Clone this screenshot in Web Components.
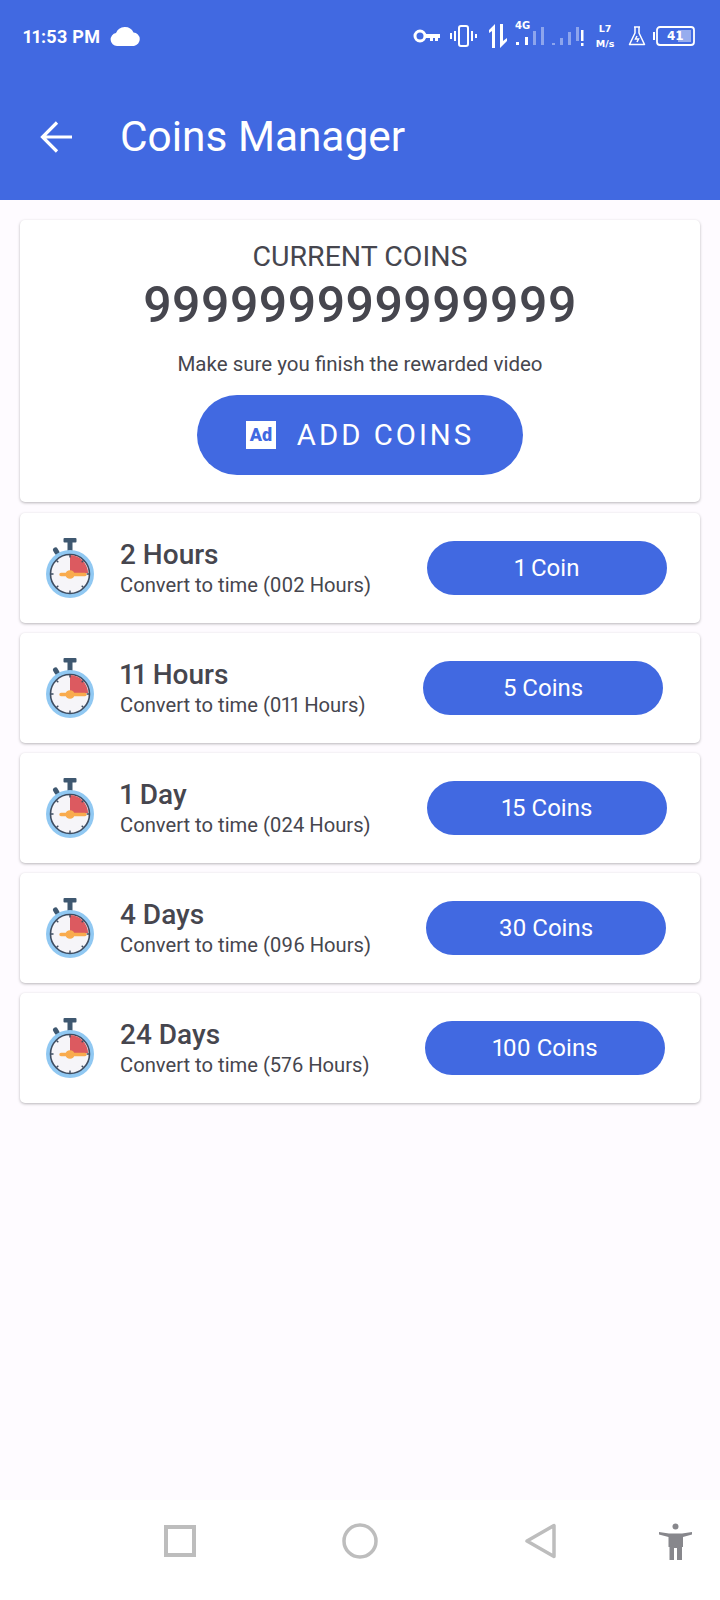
<!DOCTYPE html>
<html>
<head>
<meta charset="utf-8">
<title>Coins Manager</title>
<style>
html, body { margin: 0; padding: 0; }
body { background: #fefbff; font-family: Roboto, "Liberation Sans", sans-serif; color: #46464e; font-variant-numeric: proportional-nums; }
</style>
</head>
<body>
<coins-page>
  <status-bar slot="top"></status-bar>
  <app-bar slot="top">Coins Manager</app-bar>
  <coins-card>999999999999999</coins-card>
  <convert-row title="2 Hours" sub="Convert to time (002 Hours)" coins="1 Coin" end="33"></convert-row>
  <convert-row title="11 Hours" sub="Convert to time (011 Hours)" coins="5 Coins" end="37"></convert-row>
  <convert-row title="1 Day" sub="Convert to time (024 Hours)" coins="15 Coins" end="33"></convert-row>
  <convert-row title="4 Days" sub="Convert to time (096 Hours)" coins="30 Coins" end="34"></convert-row>
  <convert-row title="24 Days" sub="Convert to time (576 Hours)" coins="100 Coins" end="35"></convert-row>
  <nav-bar slot="bottom"></nav-bar>
</coins-page>

<script>
class CoinsPage extends HTMLElement {
    constructor() {
        super();
        this.attachShadow({mode: "open"});
        this.shadowRoot.innerHTML = `<style>
        :host { display: flex; flex-direction: column; min-height: 1600px; }
        main { flex: 1; display: flex; flex-direction: column; gap: 10px; padding: 20px 20px 0; }
        </style>
        <slot name="top"></slot>
        <main><slot></slot></main>
        <slot name="bottom"></slot>`;
    }
}

class StatusBar extends HTMLElement {
    constructor() {
        super();
        this.attachShadow({mode: "open"});
        this.shadowRoot.innerHTML = `<style>
        :host { display: flex; align-items: center; height: 72px; background: #4169e1; color: #fff; padding: 0 25px 0 23px; box-sizing: border-box; font-family: "DejaVu Sans", sans-serif; font-weight: 700; }
        .time { font-family: Roboto, sans-serif; font-size: 18px; letter-spacing: .3px; width: 87px; white-space: nowrap; }
        .right { margin-left: auto; display: flex; align-items: center; }
        svg { display: block; }
        .net { width: 70px; height: 30px; margin-left: 8px; position: relative; }
        .net span { position: absolute; left: 0; top: -1px; font-size: 10px; line-height: 11px; }
        .speed { width: 22px; margin-left: 9px; font-size: 9.5px; line-height: 15px; text-align: center; white-space: nowrap; }
        .batt { position: relative; margin-left: 7px; width: 42px; height: 20px; }
        .batt span { position: absolute; left: 14px; top: 3px; font-size: 12px; line-height: 14px; }
        </style>
        <span class="time">11:53 PM</span>
        <svg width="30" height="20" viewBox="0 0 30 20"><path fill="#fff" d="M7 20a6.500 6.500 0 0 1-1-12.900A9.500 9.500 0 0 1 23.500 6.500 6.800 6.800 0 0 1 24 20z"/></svg>
        <div class="right">
          <svg width="27" height="14" viewBox="0 0 27 14"><circle cx="7" cy="7" r="5" fill="none" stroke="#fff" stroke-width="3"/><path fill="#fff" d="M12 5h15v4h-2v3h-3V9h-2v3h-3V9h-5z"/></svg>
          <svg style="margin-left:10px" width="27" height="24" viewBox="0 0 27 24"><rect x="9" y="2" width="9" height="20" rx="2" fill="none" stroke="#fff" stroke-width="2"/><path stroke="#fff" stroke-width="2" d="M5 7v10M1 9v6M22 7v10M26 10v4"/></svg>
          <svg style="margin-left:12px" width="18" height="24" viewBox="0 0 18 24"><path fill="#fff" d="M6 0v24H3V7L0 9V6zM11 0h3v17l4-3v3l-7 7z"/></svg>
          <div class="net"><span>4G</span>
            <svg width="70" height="30" viewBox="0 0 70 30" style="position:absolute;left:0;top:0"><g fill="#fff"><rect x="1" y="21" width="3" height="3"/><rect x="10" y="16" width="3" height="8"/></g><g fill="#fff" opacity=".4"><rect x="18" y="10" width="3" height="14"/><rect x="26" y="6" width="3" height="18"/><rect x="37" y="22" width="3" height="2"/><rect x="45" y="17" width="3" height="7"/><rect x="53" y="11" width="3" height="13"/><rect x="61" y="6" width="3" height="14"/></g><rect x="66" y="9" width="2.500" height="11" fill="#fff"/><rect x="66" y="22" width="2.500" height="3" fill="#fff"/></svg>
          </div>
          <div class="speed">L7<br>M/s</div>
          <svg style="margin-left:12px" width="18" height="20" viewBox="0 0 18 20"><path fill="none" stroke="#fff" stroke-width="1.500" stroke-linejoin="round" d="M6 1h6M7 1v6L1.500 18.500h15L11 7V1"/><path stroke="#fff" stroke-width="1.500" d="M9 10l-1.500 3h3L9 16"/></svg>
          <div class="batt">
            <svg width="42" height="20" viewBox="0 0 42 20"><rect x="4" y="1" width="37" height="18" rx="3" fill="none" stroke="#fff" stroke-width="1.800"/><path stroke="#fff" stroke-width="2" d="M1 6v8"/><rect x="25" y="4" width="13" height="12" fill="#fff" opacity=".45"/></svg>
            <span>41</span>
          </div>
        </div>`;
    }
}

class AppBar extends HTMLElement {
    constructor() {
        super();
        this.attachShadow({mode: "open"});
        this.shadowRoot.innerHTML = `<style>
        :host { display: flex; align-items: center; height: 128px; background: #4169e1; color: #fff; padding: 0 0 0 40px; box-sizing: border-box; }
        svg { display: block; flex: none; margin-bottom: -1px; }
        h1 { margin: 0 0 0 48px; font-size: 42.4px; font-weight: 400; white-space: nowrap; }
        </style>
        <svg width="32" height="32" viewBox="0 0 32 32"><path fill="none" stroke="#fff" stroke-width="3.200" d="M32 16H2M17 1.500 2.500 16 17 30.500"/></svg>
        <h1><slot></slot></h1>`;
    }
}

class CoinsCard extends HTMLElement {
    constructor() {
        super();
        this.attachShadow({mode: "open"});
        this.shadowRoot.innerHTML = `<style>
        :host { display: flex; flex-direction: column; align-items: center; height: 282px; margin-bottom: 1px; box-sizing: border-box; padding-top: 21px; background: #fff; border-radius: 5px; box-shadow: 0 1px 3px rgba(0,0,0,.28); text-align: center; }
        .label { font-size: 28.5px; line-height: 32px; }
        .count { font-size: 50px; line-height: 60px; font-weight: 500; margin-top: 2px; }
        .hint { font-size: 20.5px; line-height: 26px; margin-top: 16px; }
        button { all: unset; box-sizing: border-box; margin-top: 18px; width: 326px; height: 80px; border-radius: 40px; background: #4169e1; color: #fff; font-size: 29.3px; letter-spacing: 3px; display: flex; align-items: center; justify-content: center; gap: 21px; white-space: nowrap; }
        .ad { width: 30px; height: 28px; background: #fff; color: #4169e1; font-size: 18px; font-weight: 900; letter-spacing: 0; line-height: 28px; text-align: center; }
        </style>
        <div class="label">CURRENT COINS</div>
        <div class="count"><slot></slot></div>
        <div class="hint">Make sure you finish the rewarded video</div>
        <button><span class="ad">Ad</span><span>ADD COINS</span></button>`;
    }
}

class StopwatchIcon extends HTMLElement {
    constructor() {
        super();
        this.attachShadow({mode: "open"});
        this.shadowRoot.innerHTML = `<style>
        :host { display: block; width: 48px; height: 60px; flex: none; }
        svg { display: block; }
        </style>
        <svg width="48" height="60" viewBox="0 0 48 60">
          <rect x="21.500" y="3" width="5" height="10" fill="#3f5870"/>
          <rect x="17.500" y="0" width="13" height="4.500" rx="1" fill="#3f5870"/>
          <path d="M9.500 12l1.500 2.500" stroke="#3f5870" stroke-width="5" stroke-linecap="round"/>
          <circle cx="24" cy="36" r="24" fill="#90c8f2"/>
          <circle cx="24" cy="36" r="19.500" fill="#f6f5f9" stroke="#3f4d61" stroke-width="1.600"/>
          <path d="M24 35V17A18.500 18.500 0 0 1 42 35z" fill="#dc5a60"/>
          <path d="M24 17v2.500M24 52.500V55M5 36h2.500M40.500 36H43M10.500 22.500l1.800 1.800M35.700 47.700l1.800 1.800M10.500 49.500l1.800-1.800M37.500 22.500l-1.800 1.800" stroke="#3f4d61" stroke-width="1.400"/>
          <path d="M15 36.500h6q.5-2.500 3-2.500t3 2.500h12M21 36.500q.5 2.500 3 2.500t3-2.500" stroke="#f9ab4e" stroke-width="3.400" stroke-linecap="round" fill="#f9ab4e"/>
        </svg>`;
    }
}

class ConvertRow extends HTMLElement {
    constructor() {
        super();
        this.attachShadow({mode: "open"});
    }
    connectedCallback() {
        this.shadowRoot.innerHTML = `<style>
        :host { display: flex; align-items: center; height: 110px; box-sizing: border-box; padding-left: 26px; background: #fff; border-radius: 5px; box-shadow: 0 1px 3px rgba(0,0,0,.28); }
        .text { margin-left: 26px; padding-top: 1px; white-space: nowrap; }
        .title { font-size: 28px; line-height: 32px; font-weight: 500; }
        .sub { font-size: 20.2px; line-height: 26px; margin-top: 1px; }
        .coins { margin-left: auto; margin-right: ${this.getAttribute("end")}px; width: 240px; height: 54px; border-radius: 27px; background: #4169e1; color: #fff; font-size: 24px; display: flex; align-items: center; justify-content: center; white-space: nowrap; }
        </style>
        <stopwatch-icon></stopwatch-icon>
        <div class="text">
          <div class="title">${this.getAttribute("title")}</div>
          <div class="sub">${this.getAttribute("sub")}</div>
        </div>
        <div class="coins">${this.getAttribute("coins")}</div>`;
    }
}

class NavBar extends HTMLElement {
    constructor() {
        super();
        this.attachShadow({mode: "open"});
        this.shadowRoot.innerHTML = `<style>
        :host { display: flex; align-items: center; height: 100px; padding: 0 28px 18px 164px; box-sizing: border-box; background: #fff; }
        svg { display: block; flex: none; }
        </style>
        <svg width="32" height="32" viewBox="0 0 32 32"><rect x="2" y="2" width="28" height="28" fill="none" stroke="#bdbdbd" stroke-width="4"/></svg>
        <svg style="margin-left:146px" width="36" height="36" viewBox="0 0 36 36"><circle cx="18" cy="18" r="16" fill="none" stroke="#bdbdbd" stroke-width="3.500"/></svg>
        <svg style="margin-left:147px" width="31" height="36" viewBox="0 0 31 36"><path d="M29 2.500v31L2 18z" fill="none" stroke="#bdbdbd" stroke-width="3.500" stroke-linejoin="round"/></svg>
        <svg style="margin-left:103px" width="33" height="37" viewBox="0 0 33 37" fill="#87878c"><circle cx="16.500" cy="3.500" r="3"/><path d="M0 9l10 1.500h13L33 9l.3 2.500-9.300 2.500v10h-1v13H18V25h-3v12h-4.500V24h-1V14L-.3 11.500z"/></svg>`;
    }
}

customElements.define("coins-page", CoinsPage);
customElements.define("status-bar", StatusBar);
customElements.define("app-bar", AppBar);
customElements.define("coins-card", CoinsCard);
customElements.define("stopwatch-icon", StopwatchIcon);
customElements.define("convert-row", ConvertRow);
customElements.define("nav-bar", NavBar);
</script>
</body>
</html>
